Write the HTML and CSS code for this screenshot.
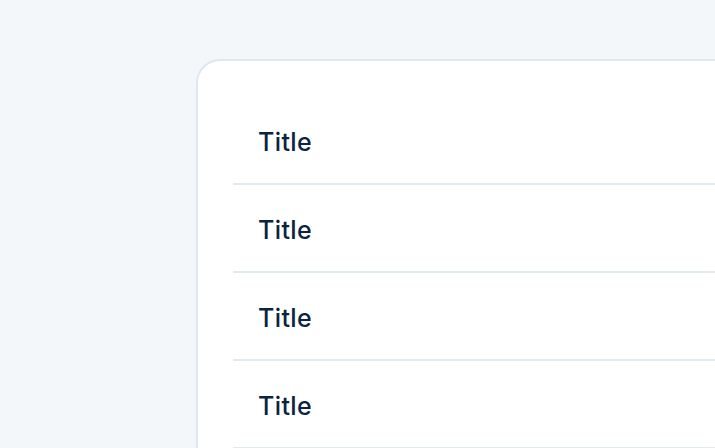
FILE: index.html
```html
<!DOCTYPE html>
<html>
<head>
<meta charset="utf-8">
<link rel="stylesheet" href="styles.css">
</head>
<body>
<div class="card">
  <ul class="list">
    <li class="row"><span class="title">Title</span></li>
    <li class="row"><span class="title">Title</span></li>
    <li class="row"><span class="title">Title</span></li>
    <li class="row"><span class="title">Title</span></li>
  </ul>
</div>
</body>
</html>
```
FILE: styles.css
```css
html, body {
  margin: 0;
  padding: 0;
  height: 100%;
  overflow: hidden;
}
body {
  background: #f3f7fa;
  font-family: Inter, "Noto Sans", sans-serif;
}
.card {
  margin: 59px 0 0 196px;
  height: 389px;
  background: #ffffff;
  border: 2px solid #dfe8f1;
  border-right: none;
  border-bottom: none;
  border-top-left-radius: 24px;
  padding: 36px 0 0 35px;
  box-sizing: border-box;
  overflow: hidden;
}
.list {
  list-style: none;
  margin: 0;
  padding: 0;
}
.row {
  height: 88px;
  display: flex;
  align-items: center;
  padding-left: 25px;
  border-bottom: 2px solid #e1e9f2;
  box-sizing: border-box;
}
.title {
  font-size: 25px;
  font-weight: 500;
  color: #0b2341;
  letter-spacing: 0.4px;
  padding-top: 4px;
}
```
